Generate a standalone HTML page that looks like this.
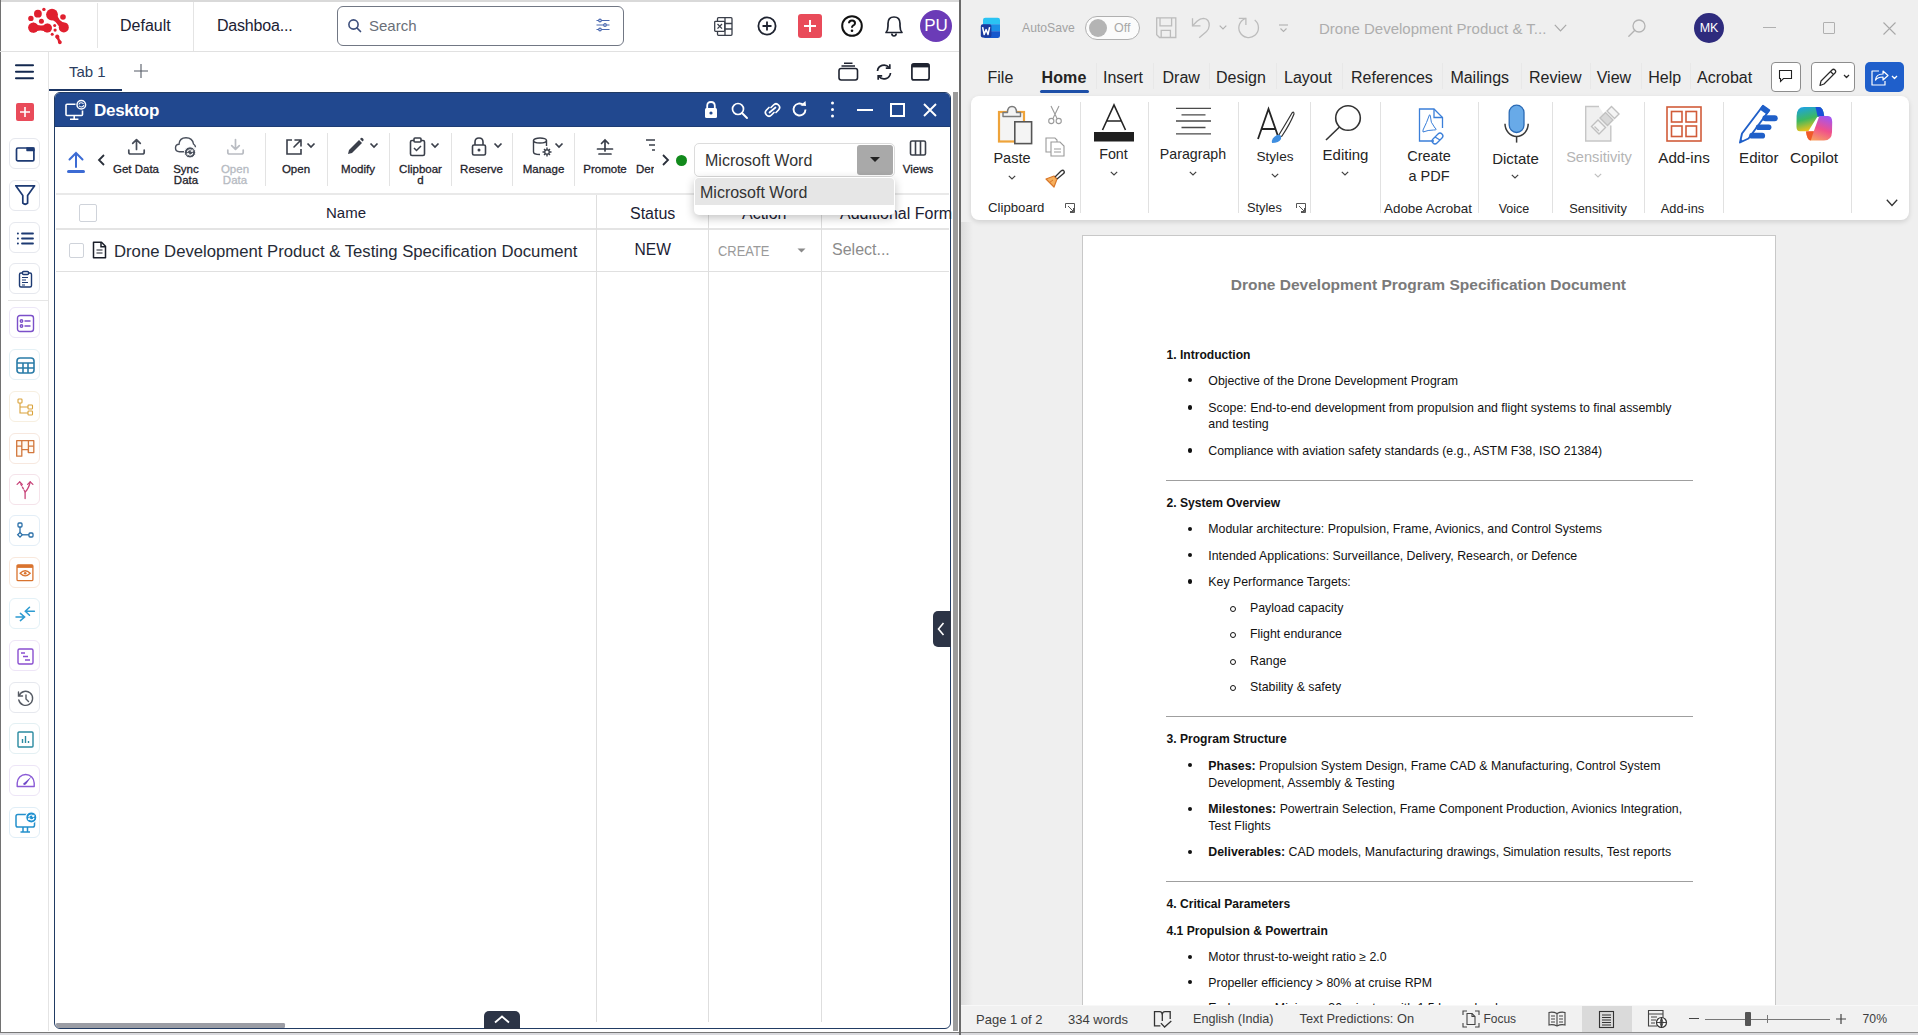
<!DOCTYPE html>
<html><head><meta charset="utf-8">
<style>
*{box-sizing:border-box;margin:0;padding:0}
html,body{width:1918px;height:1035px;overflow:hidden;background:#fff;font-family:"Liberation Sans",sans-serif;position:relative}
.a{position:absolute}
.t{position:absolute;white-space:nowrap;line-height:1}
svg{display:block;position:absolute;overflow:visible}
#left{left:0;top:0;width:961px;height:1035px;background:#fff;overflow:hidden}
#word{left:961px;top:0;width:957px;height:1035px;background:#efefef;overflow:hidden}
.sb{position:absolute;left:9px;width:31px;height:31px;border:1px solid #e6e8ee;border-radius:6px;background:#fff}
.sb svg{left:6px;top:6px}
.tb{position:absolute;font-size:11.5px;font-weight:400;color:#1f232b;text-align:center;line-height:11px;letter-spacing:0;-webkit-text-stroke:0.3px currentColor}
.vs{position:absolute;width:1px;background:#e3e3e3}
</style></head><body>
<div id="left" class="a">
  <!-- top strip / borders -->
  <div class="a" style="left:0;top:0;width:961px;height:2px;background:#d9d9d9"></div>
  <div class="a" style="left:0;top:0;width:1px;height:1035px;background:#727272"></div>
  <div class="a" style="left:0;top:1032px;width:961px;height:3px;background:#dadade;border-top:1px solid #777"></div>
  <!-- header -->
  <svg style="left:0;top:0" width="100" height="51" viewBox="0 0 100 51">
    <g fill="#e0202f">
      <circle cx="43.9" cy="9.4" r="1.7"/>
      <circle cx="37.9" cy="13.7" r="3.9"/>
      <circle cx="30.9" cy="18.4" r="2.7"/>
      <circle cx="41.4" cy="21.2" r="2.5"/>
      <circle cx="63" cy="17" r="2.8"/>
      <circle cx="52" cy="14.6" r="5.9"/>
      <circle cx="63.8" cy="27.4" r="5"/>
      <path d="M47.73,18.53 Q58.63,20.32 60.12,30.79 L67.48,24.01 Q57.165,21.68 56.27,10.67 Z"/>
      <circle cx="33.3" cy="27.6" r="5.2"/>
      <circle cx="47.4" cy="28" r="4.6"/>
      <path d="M33.15,32.8 Q40.49,28.5 47.27,32.6 L47.53,23.4 Q40.21,28.3 33.45,22.4 Z"/>
      <circle cx="54.7" cy="25.4" r="1.5"/>
      <circle cx="55.1" cy="30.1" r="1.6"/>
      <circle cx="52.2" cy="34.3" r="1.5"/>
      <circle cx="57.2" cy="36.6" r="2"/>
      <circle cx="59.9" cy="42.4" r="1.8"/>
      <path d="M55.39,37.44 Q58.27,39.62 58.27,43.16 L61.53,41.64 Q58.83,39.38 59.01,35.76 Z"/>
    </g>
  </svg>
  <div class="a" style="left:97px;top:3px;width:1px;height:45px;background:#e4e4e4"></div>
  <div class="a" style="left:193px;top:2px;width:1px;height:49px;background:#e4e4e4"></div>
  <div class="t" style="left:120px;top:18px;font-size:16px;color:#1b2133">Default</div>
  <div class="t" style="left:217px;top:18px;font-size:16px;color:#1b2133;letter-spacing:-0.2px">Dashboa...</div>
  <div class="a" style="left:0;top:51px;width:961px;height:1px;background:#e1e1e1"></div>
  <!-- search -->
  <div class="a" style="left:337px;top:6px;width:287px;height:40px;border:1px solid #717784;border-radius:6px"></div>
  <svg style="left:347px;top:18px" width="16" height="16" viewBox="0 0 16 16"><circle cx="6.5" cy="6.5" r="4.6" fill="none" stroke="#3d4f7c" stroke-width="1.6"/><path d="M10 10 L13.5 13.5" stroke="#3d4f7c" stroke-width="1.7" stroke-linecap="round"/></svg>
  <div class="t" style="left:369px;top:18px;font-size:15px;color:#6a6f78">Search</div>
  <svg style="left:595px;top:17px" width="16" height="16" viewBox="0 0 16 16"><g stroke="#4a68b0" stroke-width="1.2" fill="#fff"><path d="M1.5 3.5H14.5M1.5 8H14.5M1.5 12.5H14.5"/><circle cx="5" cy="3.5" r="1.3"/><circle cx="10" cy="8" r="1.3"/><circle cx="5" cy="12.5" r="1.3"/></g></svg>
  <!-- header icons -->
  <svg style="left:714px;top:17px" width="19" height="19" viewBox="0 0 19 19"><g fill="none" stroke="#3a3f4a" stroke-width="1.3"><rect x="3.5" y="0.7" width="14.5" height="17.6" rx="1"/><path d="M11 0.7V18.3M11 6.5H18M11 12H18"/><rect x="0.7" y="4.3" width="10" height="10" rx="0.8" fill="#fff"/><path d="M3.5 7 L8 11.6 M8 7 L3.5 11.6"/></g></svg>
  <svg style="left:757px;top:16px" width="20" height="20" viewBox="0 0 20 20"><g fill="none" stroke="#1e2330" stroke-width="1.8"><circle cx="10" cy="10" r="8.6"/><path d="M10 5.5V14.5M5.5 10H14.5"/></g></svg>
  <div class="a" style="left:798px;top:14px;width:24px;height:24px;background:#e94b5a;border-radius:3px"></div>
  <svg style="left:798px;top:14px" width="24" height="24" viewBox="0 0 24 24"><path d="M12 6V18M6 12H18" stroke="#fff" stroke-width="2"/></svg>
  <svg style="left:841px;top:15px" width="22" height="22" viewBox="0 0 22 22"><g fill="none" stroke="#111" stroke-width="2"><circle cx="11" cy="11" r="9.8"/><path d="M8 8.3 Q8 5.5 11 5.5 Q14 5.5 14 8.2 Q14 10 11.8 10.8 Q11 11.2 11 12.8"/></g><circle cx="11" cy="15.8" r="1.3" fill="#111"/></svg>
  <svg style="left:883px;top:14px" width="22" height="24" viewBox="0 0 22 24"><g fill="none" stroke="#1e2330" stroke-width="1.7"><path d="M3 18.5 Q5 16.5 5 12 V9.5 Q5 3 11 3 Q17 3 17 9.5 V12 Q17 16.5 19 18.5 Z" stroke-linejoin="round"/><path d="M8.8 19.5 Q9 22 11 22 Q13 22 13.2 19.5"/></g></svg>
  <div class="a" style="left:920px;top:10px;width:32px;height:32px;border-radius:50%;background:#6b3bb7"></div>
  <div class="t" style="left:920px;top:17px;width:32px;text-align:center;font-size:17px;color:#fff">PU</div>
  <!-- sidebar -->
  <div class="a" style="left:48px;top:52px;width:1px;height:979px;background:#e4e4e4"></div>
  <svg style="left:15px;top:64px" width="19" height="16" viewBox="0 0 19 16"><path d="M1 1.3H18M1 7.8H18M1 14.3H18" stroke="#13284f" stroke-width="2.1" stroke-linecap="round"/></svg>
  <div class="a" style="left:16px;top:103px;width:18px;height:18px;background:#e94b5a;border-radius:2px"></div>
  <svg style="left:16px;top:103px" width="18" height="18" viewBox="0 0 18 18"><path d="M9 4V14M4 9H14" stroke="#fff" stroke-width="1.6"/></svg>
  <div class="a" style="left:8px;top:300px;width:40px;height:1px;background:#e6e6e6"></div>
  <div class="sb" style="top:138px"><svg width="19" height="19" viewBox="0 0 19 19"><rect x="0.5" y="3" width="17.4" height="12.8" rx="1.4" fill="none" stroke="#1d3a73" stroke-width="1.7"/><rect x="10.3" y="2.2" width="8.3" height="4" rx="0.6" fill="#1d3a73"/></svg></div>
  <div class="sb" style="top:180px"><svg width="19" height="19" viewBox="0 0 19 19"><path d="M-0.2 -1.2 H18.6 L11.6 8.4 V16.2 Q9.2 18.3 6.8 16.2 V8.4 Z" fill="none" stroke="#1d3a73" stroke-width="1.7" stroke-linejoin="round"/></svg></div>
  <div class="sb" style="top:222px"><svg width="19" height="19" viewBox="0 0 19 19"><g stroke="#1d3a73" stroke-width="1.8" stroke-linecap="round"><path d="M6 4.5H17M6 9.5H17M6 14.5H17"/><path d="M1.8 4.5H2M1.8 9.5H2M1.8 14.5H2"/></g></svg></div>
  <div class="sb" style="top:263px"><svg width="19" height="19" viewBox="0 0 19 19"><g fill="none" stroke="#1d3a73" stroke-width="1.4"><rect x="3.5" y="3" width="12" height="14" rx="1.5"/><rect x="6.5" y="1.5" width="6" height="3" rx="1" fill="#fff"/><path d="M6 7.5H12M6 10H10M6 12.5H12M6 15H9" stroke-width="1"/></g></svg></div>
  <div class="sb" style="top:307px;border-color:#ece6f7"><svg width="19" height="19" viewBox="0 0 19 19"><g fill="none" stroke="#7b4fc9" stroke-width="1.4"><rect x="1.5" y="1.5" width="16" height="16" rx="2.5"/><circle cx="5.5" cy="7" r="1.2"/><circle cx="5.5" cy="12" r="1.2"/><path d="M8.5 7H14.5M8.5 12H14.5"/></g></svg></div>
  <div class="sb" style="top:349px;border-color:#e3f0f5"><svg width="19" height="19" viewBox="0 0 19 19"><g fill="none" stroke="#2a7ca8" stroke-width="1.6"><rect x="1" y="2" width="17" height="15" rx="3"/><path d="M1 7H18M1 12H18M7 7V17M12 7V17"/></g></svg></div>
  <div class="sb" style="top:391px;border-color:#f7efe0"><svg width="19" height="19" viewBox="0 0 19 19"><g fill="none" stroke="#d9a23a" stroke-width="1.1"><rect x="2" y="1" width="4" height="4" rx="0.8"/><rect x="12" y="7" width="4.5" height="4" rx="0.8"/><rect x="12" y="13" width="4.5" height="4" rx="0.8"/><path d="M4 5V15H12M4 9H12"/></g></svg></div>
  <div class="sb" style="top:433px;border-color:#f7e8df"><svg width="19" height="17" viewBox="0 0 19 17"><g fill="#fffaf3" stroke="#d2773c" stroke-width="1.3" stroke-linejoin="round"><path d="M0.7 0.7 H17.8 V12.6 H12.4 V9.6 H5.8 V16.2 H0.7 Z"/><path d="M5.8 0.7 V9.6 M12.4 0.7 V12.6 M0.7 6.2 H5.8 M12.4 6.2 H17.8" fill="none"/></g></svg></div>
  <div class="sb" style="top:474px;border-color:#f5e3ea"><svg width="19" height="19" viewBox="0 0 19 19"><g fill="none" stroke="#c8457a" stroke-width="1.3" stroke-linecap="round"><path d="M9.1 17.6 V11 Q12.5 8 14.2 1"/><path d="M9.1 11 L3.7 1" stroke-dasharray="2 1.6"/><path d="M11.6 3.4 L14.2 0.8 L16.9 3.4M1.1 3.4 L3.7 0.8 L6.3 3.4"/></g></svg></div>
  <div class="sb" style="top:515px;border-color:#e3eef7"><svg width="19" height="19" viewBox="0 0 19 19"><g fill="none" stroke="#2a6fa8" stroke-width="1.3"><rect x="2" y="1" width="4" height="4" rx="1"/><path d="M4 5V10.5"/><path d="M4 10.5 L6.3 12.8 L4 15.1 L1.7 12.8Z"/><rect x="13" y="11" width="4" height="4" rx="1"/><path d="M6.3 12.8H13"/></g></svg></div>
  <div class="sb" style="top:557px;border-color:#f9e8dc"><svg width="19" height="18" viewBox="0 0 19 18"><g fill="none" stroke="#d9732e" stroke-width="1.3"><rect x="1" y="0.8" width="15.9" height="15.8" rx="1.2"/><path d="M1 2.4H16.9" stroke-width="3"/><path d="M4.1 9.3 Q9.2 4.2 14.2 9.3 Q9.2 14.4 4.1 9.3Z"/></g><circle cx="9.2" cy="9.3" r="1.3" fill="#d9732e"/></svg></div>
  <div class="sb" style="top:598px;border-color:#e3f1f7"><svg width="19" height="18" viewBox="0 0 19 18"><g fill="none" stroke="#2d9bd1" stroke-width="1.5" stroke-linecap="round"><path d="M0 12H8.6M4.4 8.4L8.6 12L4.4 15.6"/><path d="M18.4 6.2H9.5M13.5 2.2L9.3 6.2L13.5 10.2"/></g></svg></div>
  <div class="sb" style="top:640px;border-color:#eee5f7"><svg width="19" height="19" viewBox="0 0 19 19"><g fill="none" stroke="#8a4fd0" stroke-width="1.4"><rect x="2" y="2" width="15" height="15" rx="1.5"/><path d="M5 6H9M7 9.5H12M9 13H14"/></g></svg></div>
  <div class="sb" style="top:682px"><svg width="19" height="19" viewBox="0 0 19 19"><g fill="none" stroke="#555a63" stroke-width="1.4" stroke-linecap="round"><path d="M3.2 6.5 A7 7 0 1 1 2.8 11"/><path d="M2.5 3V7H6.5"/><path d="M10 6V10L12.5 12.5"/></g></svg></div>
  <div class="sb" style="top:723px;border-color:#e3f0f3"><svg width="19" height="19" viewBox="0 0 19 19"><g fill="none" stroke="#2a8aa0" stroke-width="1.4"><rect x="2" y="2" width="15" height="15" rx="1"/><path d="M6.5 13V9M9.5 13V6M12.5 13V11"/></g></svg></div>
  <div class="sb" style="top:765px;border-color:#ede5f7"><svg width="20" height="19" viewBox="0 0 20 19"><g fill="none" stroke="#8a5ad6" stroke-width="1.4" stroke-linejoin="round"><path d="M1.2 14.5 V11 A8.5 8.5 0 0 1 18.2 11 V14.5 Z"/></g><path d="M7.3 12.6 Q6.8 10.8 8.6 10.4 L15.5 4.5 L10.4 11.8 Q9.2 13.5 7.3 12.6Z" fill="#7048c8"/></svg></div>
  <div class="sb" style="top:807px;border-color:#e0eef7"><svg width="22" height="21" viewBox="0 0 22 21" style="left:5px;top:5px"><g fill="none" stroke="#2390cc" stroke-width="1.5"><rect x="1" y="1.5" width="18.5" height="12.5" rx="1.8"/><path d="M8 14V18.3M12.5 14V18.3M5.5 19H15"/></g><circle cx="16.3" cy="4.4" r="5.6" fill="#1e90d0" stroke="#fff" stroke-width="1.2"/><path d="M13.7 4.1 Q14.1 1.9 16.3 2 Q18 2.1 18.8 3.4M19 4.8 Q18.6 7 16.3 6.9 Q14.6 6.8 13.8 5.5" stroke="#fff" stroke-width="1.2" fill="none"/><path d="M18.9 1.8V3.6H17.2M13.6 7V5.2H15.3" stroke="#fff" stroke-width="1" fill="none"/></svg></div>
  <!-- tab bar -->
  <div class="t" style="left:69px;top:64px;font-size:15px;color:#2b3d60">Tab 1</div>
  <svg style="left:133px;top:63px" width="16" height="16" viewBox="0 0 16 16"><path d="M8 1V15M1 8H15" stroke="#555b66" stroke-width="1.1"/></svg>
  <div class="a" style="left:49px;top:89px;width:73px;height:2px;background:#1b3563"></div>
  <svg style="left:838px;top:62px" width="21" height="19" viewBox="0 0 21 19"><g fill="none" stroke="#1e2330" stroke-width="1.6"><rect x="1" y="6.5" width="18.5" height="11.5" rx="2.2"/><path d="M3.5 4H17M6 1.2H14.5"/></g></svg>
  <svg style="left:875px;top:63px" width="18" height="18" viewBox="0 0 18 18"><g fill="none" stroke="#1e2330" stroke-width="1.7"><path d="M2.5 8 A6.5 6.5 0 0 1 14 4.5"/><path d="M15.5 10 A6.5 6.5 0 0 1 4 13.5"/><path d="M14.8 1.2V5.2H10.8M3.2 16.8V12.8H7.2"/></g></svg>
  <svg style="left:911px;top:63px" width="19" height="18" viewBox="0 0 19 18"><rect x="0.9" y="0.9" width="17.2" height="16" rx="2" fill="none" stroke="#1e2330" stroke-width="1.7"/><rect x="0.9" y="0.9" width="17.2" height="3.5" fill="#1e2330"/></svg>
  <!-- WINDOW -->
  <div class="a" style="left:54px;top:92px;width:897px;height:937px;border:1.2px solid #213b63;border-radius:6px;background:#fff;overflow:hidden">
    <div class="a" style="left:-1px;top:-1px;width:899px;height:35px;background:#21488f;border-bottom:1px solid #1d3c74"></div>
  </div>
  <!-- title bar content -->
  <svg style="left:65px;top:100px" width="22" height="21" viewBox="0 0 22 21"><g fill="none" stroke="#fff" stroke-width="1.6"><path d="M10.5 4.2H2Q1 4.2 1 5.2V14.5Q1 15.5 2 15.5H16.5Q17.5 15.5 17.5 14.5V10.5"/><path d="M9.2 15.5V19.2M5 19.3H13.4"/></g><circle cx="16.3" cy="4.8" r="4.3" fill="none" stroke="#fff" stroke-width="1.5"/><path d="M13.9 4.5 Q14.2 2.6 16.3 2.7 Q17.8 2.8 18.5 4M18.7 5.2 Q18.4 7.1 16.3 7 Q14.8 6.9 14.1 5.7" stroke="#fff" stroke-width="1.1" fill="none"/></svg>
  <div class="t" style="left:94px;top:102px;font-size:17px;font-weight:700;color:#fff;letter-spacing:-0.3px">Desktop</div>
  <svg style="left:704px;top:101px" width="14" height="17" viewBox="0 0 14 17"><path d="M3.2 8V4.8Q3.2 1 7 1Q10.8 1 10.8 4.8V8" fill="none" stroke="#fff" stroke-width="1.8"/><rect x="1" y="7" width="12" height="10" rx="1.5" fill="#fff"/><circle cx="7" cy="12" r="1.6" fill="#21488f"/></svg>
  <svg style="left:731px;top:102px" width="17" height="17" viewBox="0 0 17 17"><circle cx="7" cy="7" r="5.5" fill="none" stroke="#fff" stroke-width="1.7"/><path d="M11 11L16 16" stroke="#fff" stroke-width="1.9" stroke-linecap="round"/></svg>
  <svg style="left:763px;top:101px" width="19" height="18" viewBox="0 0 19 18"><g fill="none" stroke="#fff" stroke-width="1.7" stroke-linecap="round"><path d="M8 6.5 L10.5 4 Q13 1.5 15.5 4 Q18 6.5 15.5 9 L13 11.5"/><path d="M11 11.5 L8.5 14 Q6 16.5 3.5 14 Q1 11.5 3.5 9 L6 6.5"/><path d="M6.5 11.5 L12.5 6.5"/></g></svg>
  <svg style="left:791px;top:101px" width="17" height="17" viewBox="0 0 17 17"><path d="M14.5 8.5 A6 6 0 1 1 12.5 4" fill="none" stroke="#fff" stroke-width="1.9"/><path d="M9.5 4.5 L15 5 L14.5 0" fill="#fff"/></svg>
  <svg style="left:830px;top:101px" width="5" height="17" viewBox="0 0 5 17"><circle cx="2.5" cy="2" r="1.5" fill="#fff"/><circle cx="2.5" cy="8.5" r="1.5" fill="#fff"/><circle cx="2.5" cy="15" r="1.5" fill="#fff"/></svg>
  <div class="a" style="left:857px;top:109px;width:16px;height:2px;background:#fff"></div>
  <div class="a" style="left:890px;top:103px;width:15px;height:14px;border:2px solid #fff"></div>
  <svg style="left:923px;top:103px" width="14" height="14" viewBox="0 0 14 14"><path d="M1 1L13 13M13 1L1 13" stroke="#fff" stroke-width="1.9"/></svg>
  <!-- toolbar -->
  <svg style="left:66px;top:150px" width="20" height="24" viewBox="0 0 20 24"><g stroke="#3c6bd4" stroke-width="2" fill="none" stroke-linecap="round"><path d="M10 3V17M3.5 9.5L10 3L16.5 9.5"/></g><rect x="1" y="20" width="18" height="3" rx="1.5" fill="#3c6bd4"/></svg>
  <svg style="left:97px;top:154px" width="9" height="12" viewBox="0 0 9 12"><path d="M7 1L2 6L7 11" fill="none" stroke="#2a2f3a" stroke-width="1.8"/></svg>
  <svg style="left:127px;top:138px" width="19" height="17" viewBox="0 0 19 17"><g fill="none" stroke="#464c58" stroke-width="1.7" stroke-linecap="round" stroke-linejoin="round"><path d="M9.5 11.5V1.8M5.7 5.4L9.5 1.6L13.3 5.4"/><path d="M1.8 12V14.2Q1.8 16 3.6 16H15.4Q17.2 16 17.2 14.2V12"/></g></svg>
  <div class="tb" style="left:110px;top:164px;width:52px">Get Data</div>
  <svg style="left:174px;top:137px" width="24" height="22" viewBox="0 0 24 22"><path d="M11 14.7 H5.5 Q1.5 14.7 1.5 11 Q1.5 7.5 5 7.3 Q5.5 0.8 12 0.8 Q18.5 0.8 19.5 7 Q21.5 8.5 21.5 10.3" fill="none" stroke="#4a505c" stroke-width="1.4"/><circle cx="16" cy="15.4" r="5.6" fill="#4a505c" stroke="#fff" stroke-width="1"/><path d="M13.3 14.9 Q13.7 12.6 16 12.7 Q17.8 12.8 18.5 14.2M18.7 15.9 Q18.3 18.2 16 18.1 Q14.2 18 13.5 16.6" stroke="#fff" stroke-width="1.1" fill="none"/><path d="M18.8 12.3V14.4H16.8M13.2 18.5V16.4H15.2" stroke="#fff" stroke-width="0.9" fill="none"/></svg>
  <div class="tb" style="left:165px;top:164px;width:42px">Sync<br>Data</div>
  <svg style="left:226px;top:138px" width="19" height="17" viewBox="0 0 19 17"><g fill="none" stroke="#b9bcc2" stroke-width="1.7" stroke-linecap="round" stroke-linejoin="round"><path d="M9.5 1.5V11.2M5.7 7.6L9.5 11.4L13.3 7.6"/><path d="M1.8 12V14.2Q1.8 16 3.6 16H15.4Q17.2 16 17.2 14.2V12"/></g></svg>
  <div class="tb" style="left:214px;top:164px;width:42px;color:#b6bac2">Open<br>Data</div>
  <div class="vs" style="left:265px;top:133px;height:53px"></div>
  <svg style="left:285px;top:138px" width="32" height="18" viewBox="0 0 32 18"><g fill="none" stroke="#3a3f4a" stroke-width="1.6"><path d="M7 2H2V16H16V11"/><path d="M10 2H16V8M16 2L9 9" stroke-linecap="round"/><path d="M22.5 5.5L26 9L29.5 5.5" stroke-width="1.7"/></g></svg>
  <div class="tb" style="left:276px;top:164px;width:40px">Open</div>
  <div class="vs" style="left:327px;top:133px;height:53px"></div>
  <svg style="left:346px;top:137px" width="34" height="19" viewBox="0 0 34 19"><path d="M2 17L3 13L13 3L16 6L6 16Z" fill="#3a3f4a"/><path d="M14 2L15 1Q16 0.5 17 1.5Q18 2.5 17.5 3.5L16.5 4.5Z" fill="#3a3f4a"/><path d="M24.5 6.5L28 10L31.5 6.5" fill="none" stroke="#3a3f4a" stroke-width="1.7"/></svg>
  <div class="tb" style="left:336px;top:164px;width:44px">Modify</div>
  <div class="vs" style="left:389px;top:133px;height:53px"></div>
  <svg style="left:409px;top:137px" width="32" height="19" viewBox="0 0 32 19"><g fill="none" stroke="#3a3f4a" stroke-width="1.6"><rect x="1.5" y="3.5" width="14" height="15" rx="1.5"/><rect x="5" y="1" width="7" height="4" rx="1" fill="#fff"/><path d="M5 11L7.5 13.5L12 9" stroke-width="1.5"/><path d="M22.5 6.5L26 10L29.5 6.5" stroke-width="1.7"/></g></svg>
  <div class="tb" style="left:398px;top:164px;width:45px">Clipboar<br>d</div>
  <div class="vs" style="left:451px;top:133px;height:53px"></div>
  <svg style="left:471px;top:137px" width="32" height="19" viewBox="0 0 32 19"><g fill="none" stroke="#3a3f4a" stroke-width="1.6"><path d="M4 8V5Q4 1 8 1Q12 1 12 5V8"/><rect x="1.5" y="8" width="13" height="10" rx="1.5"/><path d="M23.5 6.5L27 10L30.5 6.5" stroke-width="1.7"/></g><circle cx="8" cy="13" r="1.5" fill="#3a3f4a"/></svg>
  <div class="tb" style="left:459px;top:164px;width:45px">Reserve</div>
  <div class="vs" style="left:512px;top:133px;height:53px"></div>
  <svg style="left:532px;top:137px" width="32" height="20" viewBox="0 0 32 20"><g fill="none" stroke="#3a3f4a" stroke-width="1.4"><ellipse cx="8" cy="3.5" rx="6.5" ry="2.5"/><path d="M1.5 3.5V15Q1.5 17.5 8 17.5M14.5 3.5V9"/><circle cx="15" cy="15" r="2.3"/><path d="M15 10.5V12M15 18V19.5M10.5 15H12M18 15H19.5M12 12L13 13M17 17L18 18M18 12L17 13M12 18L13 17"/><path d="M23.5 6.5L27 10L30.5 6.5" stroke-width="1.7"/></g></svg>
  <div class="tb" style="left:521px;top:164px;width:45px">Manage</div>
  <div class="vs" style="left:574px;top:133px;height:53px"></div>
  <svg style="left:596px;top:138px" width="18" height="18" viewBox="0 0 18 18"><g fill="none" stroke="#3a3f4a" stroke-width="1.7" stroke-linecap="round"><path d="M9 13V2M5.5 5.5L9 2L12.5 5.5M1.5 11H16.5M3 16H15"/></g></svg>
  <div class="tb" style="left:580px;top:164px;width:50px">Promote</div>
  <svg style="left:645px;top:138px" width="10" height="16" viewBox="0 0 10 16"><path d="M1 2H10M4 7H10M7 12H10" stroke="#3a3f4a" stroke-width="1.6"/></svg>
  <div class="tb" style="left:636px;top:164px;width:30px;text-align:left;overflow:hidden;height:12px"><span style="display:inline-block;width:18px;overflow:hidden">Dem</span></div>
  <svg style="left:661px;top:154px" width="9" height="12" viewBox="0 0 9 12"><path d="M2 1L7 6L2 11" fill="none" stroke="#2a2f3a" stroke-width="1.8"/></svg>
  <div class="a" style="left:676px;top:155px;width:11px;height:11px;border-radius:50%;background:#128a1c"></div>
  <div class="a" style="left:694px;top:143px;width:201px;height:34px;border:1px solid #dcdcdc;border-radius:5px;background:#fff"></div>
  <div class="t" style="left:705px;top:153px;font-size:16px;color:#333">Microsoft Word</div>
  <div class="a" style="left:857px;top:145px;width:36px;height:30px;background:#a9a9a9;border-radius:3px"></div>
  <svg style="left:869px;top:156px" width="12" height="7" viewBox="0 0 12 7"><path d="M1 1H11L6 6Z" fill="#222"/></svg>
  <svg style="left:909px;top:140px" width="18" height="16" viewBox="0 0 18 16"><g fill="none" stroke="#3a3f4a" stroke-width="1.6"><rect x="1.5" y="1" width="15" height="14" rx="1.5"/><path d="M6.5 1V15M11.5 1V15"/></g></svg>
  <div class="tb" style="left:900px;top:164px;width:36px">Views</div>
  <div class="a" style="left:56px;top:193px;width:893px;height:2px;background:#e9e9e9"></div>
  <!-- table -->
  <div class="a" style="left:79px;top:204px;width:18px;height:18px;border:1px solid #cfd3da;border-radius:2px"></div>
  <div class="t" style="left:326px;top:205px;font-size:15px;color:#1b2133">Name</div>
  <div class="t" style="left:630px;top:206px;font-size:16px;color:#1b2133">Status</div>
  <div class="t" style="left:742px;top:206px;font-size:16px;color:#1b2133">Action</div>
  <div class="t" style="left:840px;top:206px;font-size:16px;color:#1b2133">Additional Form</div>
  <div class="a" style="left:56px;top:228px;width:893px;height:2px;background:#e4e4e4"></div>
  <div class="a" style="left:56px;top:271px;width:893px;height:1px;background:#e0e0e0"></div>
  <div class="a" style="left:596px;top:195px;width:1px;height:827px;background:#dedede"></div>
  <div class="a" style="left:708px;top:195px;width:1px;height:827px;background:#dedede"></div>
  <div class="a" style="left:821px;top:195px;width:1px;height:827px;background:#dedede"></div>
  <div class="a" style="left:69px;top:243px;width:15px;height:15px;border:1px solid #cfd3da;border-radius:2px"></div>
  <svg style="left:92px;top:241px" width="15" height="18" viewBox="0 0 15 18"><g fill="none" stroke="#1b1f2a" stroke-width="1.5"><path d="M1.5 1.2H9.5L13.5 5.2V16.8H1.5Z" stroke-linejoin="round"/><path d="M9 1.2V5.7H13.5"/><path d="M4.5 9H10.5M4.5 12H10.5" stroke-width="1.2"/></g></svg>
  <div class="t" style="left:114px;top:243.5px;font-size:16.7px;color:#262b36">Drone Development Product &amp; Testing Specification Document</div>
  <div class="t" style="left:634.5px;top:242.3px;font-size:15.6px;color:#1b2133">NEW</div>
  <div class="t" style="left:717.5px;top:244.2px;font-size:14.8px;color:#9a9a9a;transform:scaleX(0.873);transform-origin:0 0">CREATE</div>
  <svg style="left:797px;top:248px" width="10" height="6" viewBox="0 0 10 6"><path d="M0.5 0.5H8.5L4.5 4.5Z" fill="#8a8a8a"/></svg>
  <div class="t" style="left:832px;top:242px;font-size:16px;color:#8c8c8c">Select...</div>
  <!-- dropdown popup -->
  <div class="a" style="left:694px;top:177px;width:201px;height:38px;background:#fff;border-radius:5px;box-shadow:0 3px 10px rgba(0,0,0,0.24)"></div>
  <div class="a" style="left:695px;top:177.5px;width:199px;height:27.5px;background:#e6e6e6;border-radius:4px 4px 0 0"></div>
  <div class="t" style="left:700px;top:185px;font-size:16px;color:#333">Microsoft Word</div>
  <!-- collapse buttons -->
  <div class="a" style="left:933px;top:611px;width:18px;height:36px;background:#2c3446;border-radius:5px 0 0 5px"></div>
  <svg style="left:936px;top:621px" width="10" height="16" viewBox="0 0 10 16"><path d="M7.5 2L2.5 8L7.5 14" fill="none" stroke="#fff" stroke-width="1.6"/></svg>
  <div class="a" style="left:484px;top:1011px;width:36px;height:18px;background:#2c3446;border-radius:5px 5px 0 0"></div>
  <svg style="left:492px;top:1014px" width="20" height="10" viewBox="0 0 20 10"><path d="M3 8.5L10 2.5L17 8.5" fill="none" stroke="#fff" stroke-width="1.8"/></svg>
  <!-- h-scroll -->
  <div class="a" style="left:56px;top:1023px;width:229px;height:5px;background:#9b9da5;border-radius:3px 3px 3px 8px"></div>
  <!-- v-scroll -->
  <div class="a" style="left:953px;top:92px;width:5px;height:939px;background:#9c9c9c"></div>
  <div class="a" style="left:959px;top:0;width:2px;height:1035px;background:#6a6a6a"></div>
</div>
<div id="word" class="a">
<div class="a" style="left:0;top:0;width:957px;height:1035px;background:#efefef"></div>
<div class="a" style="left:0;top:222px;width:12px;height:783px;background:linear-gradient(90deg,#dcdcdc,#efefef)"></div>
<svg style="left:19px;top:17px" width="21" height="22" viewBox="0 0 21 22">
<defs><clipPath id="wclip"><rect x="3" y="0.8" width="17" height="20.2" rx="2.3"/></clipPath></defs>
<g clip-path="url(#wclip)"><rect x="0" y="0" width="21" height="7.2" fill="#2ac3f3"/><rect x="0" y="7.2" width="21" height="7" fill="#1a8fe6"/><rect x="0" y="14.2" width="21" height="8" fill="#1557cc"/></g>
<rect x="0.8" y="7.2" width="10.6" height="13.3" rx="1.8" fill="#1a3a9e"/>
<path d="M2.6 10.2 L4.2 17.5 L6.1 12.6 L8 17.5 L9.6 10.2" fill="none" stroke="#fff" stroke-width="1.5" stroke-linejoin="round"/>
</svg>
<div class="t" style="left:61px;top:22px;font-size:12.2px;color:#a3a3a3">AutoSave</div>
<div class="a" style="left:124px;top:15.5px;width:55px;height:24px;border:1px solid #b0b0b0;border-radius:12px;background:#fbfbfb"></div>
<div class="a" style="left:128px;top:19px;width:18px;height:18px;border-radius:50%;background:#b4b4b4"></div>
<div class="t" style="left:153px;top:22px;font-size:12.5px;color:#a8a8a8">Off</div>
<svg style="left:195px;top:17px" width="21" height="22" viewBox="0 0 21 22"><g fill="none" stroke="#bcbcbc" stroke-width="1.3"><path d="M0.7 0.9 H19.8 V20.5 H3.5 L0.7 17.8 Z"/><path d="M4 0.9 V8.8 H15.6 V0.9 M5.2 20.5 V13.4 H14.4 V20.5"/></g></svg>
<svg style="left:230px;top:17px" width="20" height="22" viewBox="0 0 20 22"><g fill="none" stroke="#bcbcbc" stroke-width="1.3"><path d="M1.5 1.3 V8.8 H9.5"/><path d="M1.5 8.8 L6 4.3 Q9 1.3 12.5 1.3 Q18.5 1.8 18.2 8.8 Q18 12 15.5 14.5 L8.2 20.7"/></g></svg>
<svg style="left:258px;top:25px" width="8" height="5" viewBox="0 0 8 5"><path d="M0.7 0.7L4 4L7.3 0.7" fill="none" stroke="#b0b0b0" stroke-width="1.1"/></svg>
<svg style="left:276px;top:16px" width="24" height="24" viewBox="0 0 24 24"><g fill="none" stroke="#bcbcbc" stroke-width="1.3"><path d="M1.8 2.3 H8.9 V9"/><path d="M8.9 2.3 A9.8 9.8 0 1 0 17.7 4"/></g></svg>
<svg style="left:317px;top:24px" width="11" height="10" viewBox="0 0 11 10"><g fill="none" stroke="#b0b0b0" stroke-width="1.1"><path d="M1 1H10"/><path d="M2.5 4.5L5.5 7.5L8.5 4.5"/></g></svg>
<div class="t" style="left:358px;top:21px;font-size:15px;color:#adadad">Drone Development Product &amp; T...</div>
<svg style="left:593px;top:24px" width="13" height="8" viewBox="0 0 13 8"><path d="M0.8 0.8L6.5 6.8L12.2 0.8" fill="none" stroke="#a8a8a8" stroke-width="1.2"/></svg>
<svg style="left:667px;top:19px" width="18" height="18" viewBox="0 0 18 18"><g fill="none" stroke="#b3b3b3" stroke-width="1.3"><circle cx="11" cy="7" r="6"/><path d="M6.8 11.2 L0.8 17.2" stroke-linecap="round"/></g></svg>
<div class="a" style="left:733px;top:13px;width:30px;height:30px;border-radius:50%;background:#2e2b7d"></div>
<div class="t" style="left:733px;top:22px;width:30px;text-align:center;font-size:12.5px;color:#fff">MK</div>
<div class="a" style="left:802px;top:27px;width:13px;height:1px;background:#b0b0b0"></div>
<div class="a" style="left:862px;top:22px;width:12px;height:12px;border:1px solid #b0b0b0;border-radius:1px"></div>
<svg style="left:922px;top:22px" width="13" height="13" viewBox="0 0 13 13"><path d="M0.5 0.5L12.5 12.5M12.5 0.5L0.5 12.5" stroke="#a8a8a8" stroke-width="1.1"/></svg>
<div class="t" style="left:26.5px;top:70px;font-size:16px;color:#242424;">File</div>
<div class="t" style="left:80.6px;top:70px;font-size:16px;color:#242424;font-weight:700;letter-spacing:0.1px;">Home</div>
<div class="t" style="left:142px;top:70px;font-size:16px;color:#242424;">Insert</div>
<div class="t" style="left:201.5px;top:70px;font-size:16px;color:#242424;">Draw</div>
<div class="t" style="left:255px;top:70px;font-size:16px;color:#242424;">Design</div>
<div class="t" style="left:323px;top:70px;font-size:16px;color:#242424;">Layout</div>
<div class="t" style="left:390px;top:70px;font-size:16px;color:#242424;">References</div>
<div class="t" style="left:489.4px;top:70px;font-size:16px;color:#242424;">Mailings</div>
<div class="t" style="left:568px;top:70px;font-size:16px;color:#242424;">Review</div>
<div class="t" style="left:635.7px;top:70px;font-size:16px;color:#242424;">View</div>
<div class="t" style="left:687.3px;top:70px;font-size:16px;color:#242424;">Help</div>
<div class="t" style="left:736px;top:70px;font-size:16px;color:#242424;">Acrobat</div>
<div class="a" style="left:134.6px;top:63px;width:1px;height:26px;background:#e8e8e8"></div>
<div class="a" style="left:192px;top:63px;width:1px;height:26px;background:#e8e8e8"></div>
<div class="a" style="left:248px;top:63px;width:1px;height:26px;background:#e8e8e8"></div>
<div class="a" style="left:314.6px;top:63px;width:1px;height:26px;background:#e8e8e8"></div>
<div class="a" style="left:381px;top:63px;width:1px;height:26px;background:#e8e8e8"></div>
<div class="a" style="left:480.5px;top:63px;width:1px;height:26px;background:#e8e8e8"></div>
<div class="a" style="left:560px;top:63px;width:1px;height:26px;background:#e8e8e8"></div>
<div class="a" style="left:629px;top:63px;width:1px;height:26px;background:#e8e8e8"></div>
<div class="a" style="left:679.7px;top:63px;width:1px;height:26px;background:#e8e8e8"></div>
<div class="a" style="left:729px;top:63px;width:1px;height:26px;background:#e8e8e8"></div>
<div class="a" style="left:79px;top:90px;width:49px;height:3px;border-radius:2px;background:#1d4fa8"></div>
<div class="a" style="left:810px;top:62px;width:30px;height:30px;border:1px solid #8d8d8d;border-radius:4px;background:#fff"></div>
<svg style="left:817px;top:69px" width="16" height="15" viewBox="0 0 16 15"><path d="M1.5 1.5H13.5V9.5H5.5L2.5 12.5V9.5H1.5Z" fill="none" stroke="#222" stroke-width="1.1" stroke-linejoin="miter"/></svg>
<div class="a" style="left:850px;top:62px;width:44px;height:30px;border:1px solid #8d8d8d;border-radius:4px;background:#fff"></div>
<svg style="left:857px;top:67px" width="34" height="20" viewBox="0 0 34 20"><g fill="none" stroke="#2a2a2a" stroke-width="1.2" stroke-linejoin="round"><path d="M2 18.5 L3 14 L14 3 Q15.5 1.5 17 3 Q18.5 4.5 17 6 L6 17 Z"/><path d="M12.5 4.5 L15.5 7.5"/><path d="M26 8 L28.5 10.5 L31 8" stroke-width="1.3"/></g></svg>
<div class="a" style="left:904px;top:62px;width:39px;height:30px;border-radius:5px;background:#1f5fcb"></div>
<svg style="left:909px;top:68px" width="30" height="18" viewBox="0 0 30 18"><g fill="none" stroke="#fff" stroke-width="1.2" stroke-linejoin="round"><path d="M9 3H2V17H15V13"/><path d="M5.5 12 Q6 6 13 6 V3 L18 7.5 L13 12 V9 Q8 9 5.5 12Z"/><path d="M22 8 L24.5 10.5 L27 8" stroke-width="1.3"/></g></svg>
<div class="a" style="left:10px;top:96px;width:938px;height:124px;background:#fff;border-radius:8px;box-shadow:0 2px 5px rgba(0,0,0,0.13)"></div>
<div class="a" style="left:118.6px;top:102px;width:1px;height:111px;background:#e1e1e1"></div>
<div class="a" style="left:187.2px;top:102px;width:1px;height:111px;background:#e1e1e1"></div>
<div class="a" style="left:277.3px;top:102px;width:1px;height:111px;background:#e1e1e1"></div>
<div class="a" style="left:349.3px;top:102px;width:1px;height:111px;background:#e1e1e1"></div>
<div class="a" style="left:419.4px;top:102px;width:1px;height:111px;background:#e1e1e1"></div>
<div class="a" style="left:517px;top:102px;width:1px;height:111px;background:#e1e1e1"></div>
<div class="a" style="left:591px;top:102px;width:1px;height:111px;background:#e1e1e1"></div>
<div class="a" style="left:683px;top:102px;width:1px;height:111px;background:#e1e1e1"></div>
<div class="a" style="left:761.6px;top:102px;width:1px;height:111px;background:#e1e1e1"></div>
<div class="a" style="left:890px;top:102px;width:1px;height:111px;background:#e1e1e1"></div>
<svg style="left:35px;top:104px" width="38" height="42" viewBox="0 0 38 42">
<rect x="3" y="8" width="25" height="29.5" fill="#f4f4f4" stroke="#eea33a" stroke-width="2.2"/>
<path d="M7 12.5 V8.5 H11.5 Q11.5 2.5 16 2.5 Q20.5 2.5 20.5 8.5 H24.5 V12.5 Z" fill="#f4f4f4" stroke="#7a7a7a" stroke-width="1.4" stroke-linejoin="round"/>
<rect x="18.8" y="17.8" width="16.8" height="21.8" fill="#f4f4f4" stroke="#555" stroke-width="1.6"/>
</svg>
<div class="t" style="left:-9.0px;top:151.3px;width:120px;text-align:center;font-size:14.5px;color:#242424">Paste</div>
<svg style="left:47px;top:175.0px" width="8" height="5" viewBox="0 0 8 5"><path d="M0.8 0.8L4 4L7.2 0.8" fill="none" stroke="#424242" stroke-width="1.2"/></svg>
<svg style="left:87px;top:105px" width="14" height="20" viewBox="0 0 14 20"><g fill="none" stroke="#9a9a9a" stroke-width="1.1"><circle cx="3.3" cy="16" r="2.6"/><circle cx="10.7" cy="16" r="2.6"/><path d="M4.8 13.8L11 1M9.2 13.8L3 1"/></g></svg>
<svg style="left:84px;top:137px" width="20" height="20" viewBox="0 0 20 20"><g fill="none" stroke="#9a9a9a" stroke-width="1.1"><path d="M6 15H1V1H10L12 3V5"/><path d="M6 5H15L19 9V19H6Z"/><path d="M9 12H16M9 15H16"/></g></svg>
<svg style="left:84px;top:169px" width="20" height="19" viewBox="0 0 20 19"><g stroke-linejoin="round"><path d="M1 10 L9 18 L12 10 L9 7 Z" fill="#f6b05c" stroke="#d9772a" stroke-width="1.2"/><path d="M10 8 L16 2 Q18 0.5 19 2 Q20 3.5 18 5 L12 10" fill="none" stroke="#333" stroke-width="1.3"/><path d="M4.5 13.5L8 11" stroke="#d9772a" stroke-width="1"/></g></svg>
<div class="t" style="left:27px;top:201.0px;font-size:13.2px;color:#242424;font-weight:400;">Clipboard</div>
<svg style="left:104px;top:203px" width="10" height="10" viewBox="0 0 10 10"><g fill="none" stroke="#555" stroke-width="1"><path d="M0.5 5V0.5H9.5V9.5H5"/><path d="M3 3L8.5 8.5M5 8.5H8.5V5"/></g></svg>
<svg style="left:133px;top:104px" width="40" height="38" viewBox="0 0 40 38"><path d="M8.5 26 L20 1 L31.5 26 M13 17H27" fill="none" stroke="#242424" stroke-width="1.6"/><rect x="0" y="28" width="40" height="9.5" fill="#1f1f1f"/></svg>
<div class="t" style="left:92.5px;top:147.3px;width:120px;text-align:center;font-size:14.3px;color:#242424">Font</div>
<svg style="left:148.5px;top:170.5px" width="8" height="5" viewBox="0 0 8 5"><path d="M0.8 0.8L4 4L7.2 0.8" fill="none" stroke="#424242" stroke-width="1.2"/></svg>
<svg style="left:214.5px;top:107px" width="36" height="28" viewBox="0 0 36 28"><g stroke="#4a4a4a" stroke-width="1.4"><path d="M0 1.4H35M5.5 7.9H29.5M0 14H35M5.5 20.5H29.5M0 26.9H35"/></g></svg>
<div class="t" style="left:172.0px;top:147.3px;width:120px;text-align:center;font-size:14.2px;color:#242424">Paragraph</div>
<svg style="left:228px;top:170.5px" width="8" height="5" viewBox="0 0 8 5"><path d="M0.8 0.8L4 4L7.2 0.8" fill="none" stroke="#424242" stroke-width="1.2"/></svg>
<svg style="left:296px;top:108px" width="38" height="36" viewBox="0 0 38 36"><path d="M1 31 L11.5 1 L22 31 M5 21H18" fill="none" stroke="#242424" stroke-width="1.8"/>
<path d="M20 30 Q25 22 35 5 Q37 3 37 6 Q33 16 25 28 Z" fill="#fff" stroke="#333" stroke-width="1.2"/>
<path d="M15 35 Q14 30 20 27 Q25 26 24 31 Q22 35 15 35Z" fill="#3f8ee0"/></svg>
<div class="t" style="left:254.0px;top:149.7px;width:120px;text-align:center;font-size:13.6px;color:#242424">Styles</div>
<svg style="left:309.5px;top:173.0px" width="8" height="5" viewBox="0 0 8 5"><path d="M0.8 0.8L4 4L7.2 0.8" fill="none" stroke="#424242" stroke-width="1.2"/></svg>
<div class="t" style="left:286px;top:201.5px;font-size:12.8px;color:#242424;font-weight:400;">Styles</div>
<svg style="left:335px;top:203px" width="10" height="10" viewBox="0 0 10 10"><g fill="none" stroke="#555" stroke-width="1"><path d="M0.5 5V0.5H9.5V9.5H5"/><path d="M3 3L8.5 8.5M5 8.5H8.5V5"/></g></svg>
<svg style="left:364px;top:104px" width="38" height="37" viewBox="0 0 38 37"><circle cx="23" cy="14" r="12.3" fill="none" stroke="#333" stroke-width="1.6"/><path d="M14.5 23 L1 36" stroke="#333" stroke-width="1.6"/></svg>
<div class="t" style="left:324.5px;top:147.2px;width:120px;text-align:center;font-size:15px;color:#242424">Editing</div>
<svg style="left:379.5px;top:170.5px" width="8" height="5" viewBox="0 0 8 5"><path d="M0.8 0.8L4 4L7.2 0.8" fill="none" stroke="#424242" stroke-width="1.2"/></svg>
<svg style="left:457px;top:108px" width="26" height="36" viewBox="0 0 26 36"><g fill="none" stroke="#3b7fd9" stroke-width="1.3"><path d="M16 33H1.5V1H16L24.5 9.5V20"/><path d="M16 1V9.5H24.5"/><path d="M5 22 Q9 14 11 8 Q12 5 12.5 9 Q12 14 17 20 Q20 22 15.5 22 Q10 22 5 24Z" stroke-width="1"/><path d="M15 31 L20 26 Q22 24 24 26 Q26 28 24 30 L19 35 Q17 37 15 35 Q13 33 15 31Z"/><path d="M17 29 L22 32"/></g></svg>
<div class="t" style="left:408.0px;top:149.3px;width:120px;text-align:center;font-size:14.5px;color:#242424">Create</div>
<div class="t" style="left:408.0px;top:168.9px;width:120px;text-align:center;font-size:14.5px;color:#242424">a PDF</div>
<div class="t" style="left:423px;top:201.9px;font-size:13.4px;color:#242424;font-weight:400;">Adobe Acrobat</div>
<svg style="left:542.5px;top:104px" width="26" height="40" viewBox="0 0 26 40"><rect x="5.2" y="1.2" width="14.8" height="27.3" rx="7.4" fill="#68aae8" stroke="#2a6ab5" stroke-width="1.3"/><path d="M1 19.8 A11.6 12.6 0 0 0 24.2 19.8" fill="none" stroke="#3a3a3a" stroke-width="1.5"/><path d="M12.6 32.4 V38.6" stroke="#3a3a3a" stroke-width="1.5"/></svg>
<div class="t" style="left:494.5px;top:151.2px;width:120px;text-align:center;font-size:15px;color:#242424">Dictate</div>
<svg style="left:550px;top:174.0px" width="8" height="5" viewBox="0 0 8 5"><path d="M0.8 0.8L4 4L7.2 0.8" fill="none" stroke="#424242" stroke-width="1.2"/></svg>
<div class="t" style="left:493.0px;top:202.5px;width:120px;text-align:center;font-size:12.5px;color:#242424">Voice</div>
<svg style="left:624px;top:104px" width="36" height="40" viewBox="0 0 36 40"><path d="M14 2.5 H0.7 V37 H25.8 V21.5" fill="#f0f0f0" stroke="#c6c6c6" stroke-width="1.4"/><g fill="#f4f4f4" stroke="#c0c0c0" stroke-width="1.4"><path d="M6.5 22.5 L13 16 L20.5 23.5 L14 30 Z"/><path d="M15 14 L20.5 8.5 L28 16 L22.5 21.5 Z" fill="#d8d8d8"/><path d="M22 7 L26.5 2.5 L34 10 L29.5 14.5 Z"/></g><path d="M9.5 22.5 L14 27" stroke="#c0c0c0" stroke-width="1.2"/></svg>
<div class="t" style="left:578.0px;top:149.9px;width:120px;text-align:center;font-size:14.6px;color:#b5b5b5">Sensitivity</div>
<svg style="left:633px;top:173.0px" width="8" height="5" viewBox="0 0 8 5"><path d="M0.8 0.8L4 4L7.2 0.8" fill="none" stroke="#c0c0c0" stroke-width="1.2"/></svg>
<div class="t" style="left:577.0px;top:202.5px;width:120px;text-align:center;font-size:12.8px;color:#242424">Sensitivity</div>
<svg style="left:705px;top:106px" width="36" height="36" viewBox="0 0 36 36"><g fill="none" stroke="#d15c3a" stroke-width="1.6"><rect x="1" y="1" width="34" height="34"/><rect x="5.5" y="5.5" width="10.5" height="10.5"/><rect x="20" y="5.5" width="10.5" height="10.5"/><rect x="5.5" y="20" width="10.5" height="10.5"/><rect x="20" y="20" width="10.5" height="10.5"/></g></svg>
<div class="t" style="left:663.0px;top:149.8px;width:120px;text-align:center;font-size:15.2px;color:#242424">Add-ins</div>
<div class="t" style="left:661.5px;top:202.5px;width:120px;text-align:center;font-size:12.8px;color:#242424">Add-ins</div>
<svg style="left:774px;top:100px" width="50" height="50" viewBox="0 0 50 50"><path d="M5 42.5 L7 33.5 L28 5.8 L34.3 10.2 L13.5 38.5 Z" fill="#fff" stroke="#1f5fc8" stroke-width="1.9" stroke-linejoin="round"/><path d="M27.5 5 L35 10.5 L31.8 14.5 L24.5 9.2Z" fill="#1f5fc8"/><g fill="#1f5fc8"><rect x="27.4" y="15.3" width="15.3" height="6" rx="3"/><rect x="20.8" y="24.4" width="15.6" height="5.6" rx="2.8"/><rect x="14.2" y="32.8" width="15.9" height="5.8" rx="2.9"/></g><path d="M4.5 43 L8 41 L6 39Z" fill="#1f5fc8"/></svg>
<div class="t" style="left:737.8px;top:149.8px;width:120px;text-align:center;font-size:15.1px;color:#242424">Editor</div>
<svg style="left:834px;top:105px" width="40" height="37" viewBox="0 0 40 37"><defs>
<linearGradient id="cp1" x1="0" y1="0" x2="0.3" y2="1"><stop offset="0" stop-color="#1aa0f0"/><stop offset="0.55" stop-color="#3cb860"/><stop offset="1" stop-color="#f0c21a"/></linearGradient>
<linearGradient id="cp2" x1="0.7" y1="0" x2="0.3" y2="1"><stop offset="0" stop-color="#a455f0"/><stop offset="0.5" stop-color="#f0508c"/><stop offset="1" stop-color="#f8a060"/></linearGradient></defs>
<path d="M9 2.1 L24 2.1 Q28 2.1 29.2 11 L22.2 12 L13.3 26.2 L5 26.2 Q1.5 26.2 1.5 22 L1.6 11 Q1.8 2.1 9 2.1 Z" fill="url(#cp1)"/>
<path d="M20.5 2.1 L24 2.1 Q28 2.1 29.2 11 L22.6 11.6 Z" fill="#1a4fd8"/>
<path d="M24.3 11 L33 11 Q37.2 11 37.2 17 L37 27 Q36.8 35.5 29 35.5 L16 35.5 Q12 35.5 11 26.5 L18.8 26.2 Z" fill="url(#cp2)"/>
<path d="M11 26.5 L18.8 26.2 L15.8 35.5 Q12 35.5 11 26.5Z" fill="#f05a28"/>
</svg>
<div class="t" style="left:793.0px;top:149.8px;width:120px;text-align:center;font-size:15.5px;color:#242424">Copilot</div>
<svg style="left:924.5px;top:199px" width="12" height="8" viewBox="0 0 12 8"><path d="M0.8 0.8L6 6.5L11.2 0.8" fill="none" stroke="#333" stroke-width="1.3"/></svg>
<div class="a" style="left:121px;top:235px;width:694px;height:790px;background:#fff;border:1px solid #c8c8c8"></div>
<div class="t" style="left:269.7px;top:277.2px;font-size:15.5px;color:#7a7a7a;font-weight:700;">Drone Development Program Specification Document</div>
<div class="t" style="left:205.5px;top:349.3px;font-size:12.1px;color:#121212;font-weight:700;">1. Introduction</div>
<div class="a" style="left:226.6px;top:377.9px;width:4.5px;height:4.5px;border-radius:50%;background:#111"></div>
<div class="t" style="left:247.3px;top:374.5px;font-size:12.35px;color:#121212;font-weight:400;">Objective of the Drone Development Program</div>
<div class="a" style="left:226.6px;top:405.1px;width:4.5px;height:4.5px;border-radius:50%;background:#111"></div>
<div class="t" style="left:247.3px;top:401.7px;font-size:12.35px;color:#121212;font-weight:400;">Scope: End-to-end development from propulsion and flight systems to final assembly</div>
<div class="t" style="left:247.3px;top:418.4px;font-size:12.35px;color:#121212;font-weight:400;">and testing</div>
<div class="a" style="left:226.6px;top:448.1px;width:4.5px;height:4.5px;border-radius:50%;background:#111"></div>
<div class="t" style="left:247.3px;top:444.7px;font-size:12.35px;color:#121212;font-weight:400;">Compliance with aviation safety standards (e.g., ASTM F38, ISO 21384)</div>
<div class="a" style="left:205px;top:480px;width:527px;height:1px;background:#9f9f9f"></div>
<div class="t" style="left:205.5px;top:496.8px;font-size:12.1px;color:#121212;font-weight:700;">2. System Overview</div>
<div class="a" style="left:226.6px;top:526.5px;width:4.5px;height:4.5px;border-radius:50%;background:#111"></div>
<div class="t" style="left:247.3px;top:523.1px;font-size:12.35px;color:#121212;font-weight:400;">Modular architecture: Propulsion, Frame, Avionics, and Control Systems</div>
<div class="a" style="left:226.6px;top:552.9px;width:4.5px;height:4.5px;border-radius:50%;background:#111"></div>
<div class="t" style="left:247.3px;top:549.5px;font-size:12.35px;color:#121212;font-weight:400;">Intended Applications: Surveillance, Delivery, Research, or Defence</div>
<div class="a" style="left:226.6px;top:579.4px;width:4.5px;height:4.5px;border-radius:50%;background:#111"></div>
<div class="t" style="left:247.3px;top:576.0px;font-size:12.35px;color:#121212;font-weight:400;">Key Performance Targets:</div>
<div class="a" style="left:269px;top:605.5px;width:6px;height:6px;border-radius:50%;border:1.2px solid #111"></div>
<div class="t" style="left:289px;top:601.9px;font-size:12.35px;color:#121212;font-weight:400;">Payload capacity</div>
<div class="a" style="left:269px;top:631.8px;width:6px;height:6px;border-radius:50%;border:1.2px solid #111"></div>
<div class="t" style="left:289px;top:628.2px;font-size:12.35px;color:#121212;font-weight:400;">Flight endurance</div>
<div class="a" style="left:269px;top:658.5px;width:6px;height:6px;border-radius:50%;border:1.2px solid #111"></div>
<div class="t" style="left:289px;top:654.9px;font-size:12.35px;color:#121212;font-weight:400;">Range</div>
<div class="a" style="left:269px;top:684.7px;width:6px;height:6px;border-radius:50%;border:1.2px solid #111"></div>
<div class="t" style="left:289px;top:681.1px;font-size:12.35px;color:#121212;font-weight:400;">Stability &amp; safety</div>
<div class="a" style="left:205px;top:716px;width:527px;height:1px;background:#9f9f9f"></div>
<div class="t" style="left:205.5px;top:733.4px;font-size:12.1px;color:#121212;font-weight:700;">3. Program Structure</div>
<div class="a" style="left:226.6px;top:762.9px;width:4.5px;height:4.5px;border-radius:50%;background:#111"></div>
<div class="t" style="left:247.3px;top:759.5px;font-size:12.35px;color:#121212;font-weight:400;"><b>Phases:</b> Propulsion System Design, Frame CAD &amp; Manufacturing, Control System</div>
<div class="t" style="left:247.3px;top:777.1px;font-size:12.35px;color:#121212;font-weight:400;">Development, Assembly &amp; Testing</div>
<div class="a" style="left:226.6px;top:806.8px;width:4.5px;height:4.5px;border-radius:50%;background:#111"></div>
<div class="t" style="left:247.3px;top:803.4px;font-size:12.35px;color:#121212;font-weight:400;"><b>Milestones:</b> Powertrain Selection, Frame Component Production, Avionics Integration,</div>
<div class="t" style="left:247.3px;top:819.9px;font-size:12.35px;color:#121212;font-weight:400;">Test Flights</div>
<div class="a" style="left:226.6px;top:849.5px;width:4.5px;height:4.5px;border-radius:50%;background:#111"></div>
<div class="t" style="left:247.3px;top:846.1px;font-size:12.35px;color:#121212;font-weight:400;"><b>Deliverables:</b> CAD models, Manufacturing drawings, Simulation results, Test reports</div>
<div class="a" style="left:205px;top:880.5px;width:527px;height:1px;background:#9f9f9f"></div>
<div class="t" style="left:205.5px;top:898.4px;font-size:12.1px;color:#121212;font-weight:700;">4. Critical Parameters</div>
<div class="t" style="left:205.5px;top:924.9px;font-size:12.1px;color:#121212;font-weight:700;">4.1 Propulsion &amp; Powertrain</div>
<div class="a" style="left:226.6px;top:954.6px;width:4.5px;height:4.5px;border-radius:50%;background:#111"></div>
<div class="t" style="left:247.3px;top:951.2px;font-size:12.35px;color:#121212;font-weight:400;">Motor thrust-to-weight ratio &#8805; 2.0</div>
<div class="a" style="left:226.6px;top:979.9px;width:4.5px;height:4.5px;border-radius:50%;background:#111"></div>
<div class="t" style="left:247.3px;top:976.5px;font-size:12.35px;color:#121212;font-weight:400;">Propeller efficiency &gt; 80% at cruise RPM</div>
<div class="a" style="left:226.6px;top:1005.7px;width:4.5px;height:4.5px;border-radius:50%;background:#111"></div>
<div class="t" style="left:247.3px;top:1002.3px;font-size:12.35px;color:#121212;font-weight:400;">Endurance: Minimum 30 minutes with 1.5 kg payload</div>
<div class="a" style="left:0;top:1005px;width:957px;height:27px;background:#f1f1f1;border-top:1px solid #f8f8f8"></div>
<div class="a" style="left:0;top:1032px;width:957px;height:3px;background:#d9d9dc;border-top:1px solid #8f8f8f"></div>
<div class="t" style="left:15px;top:1012.5px;font-size:13px;color:#3d3d3d;font-weight:400;">Page 1 of 2</div>
<div class="t" style="left:107px;top:1012.5px;font-size:13px;color:#3d3d3d;font-weight:400;">334 words</div>
<svg style="left:189px;top:1006px" width="26" height="29" viewBox="0 0 26 29"><g fill="none" stroke="#333" stroke-width="1.3"><path d="M10.4 19.9 H4.5 V5.6 H9.5 Q12.3 5.6 12.3 8.5 V15.1"/><path d="M12.3 8.5 Q12.3 5.6 15 5.6 H20.2 V12.9"/><path d="M10.9 17.1 L14.6 21 L21.3 15.1"/></g></svg>
<div class="t" style="left:232px;top:1012.5px;font-size:12.6px;color:#3d3d3d;font-weight:400;">English (India)</div>
<div class="t" style="left:338.5px;top:1012.5px;font-size:12.8px;color:#3d3d3d;font-weight:400;">Text Predictions: On</div>
<svg style="left:501px;top:1010px" width="18" height="18" viewBox="0 0 18 18"><g fill="none" stroke="#444" stroke-width="1.1"><path d="M1 5V1H5M13 1H17V5M17 13V17H13M5 17H1V13"/><path d="M5 3.5H10L13 6.5V14.5H5Z"/><path d="M10 3.5V6.5H13"/></g></svg>
<div class="t" style="left:522.4px;top:1012.6px;font-size:12px;color:#3d3d3d;font-weight:400;">Focus</div>
<svg style="left:586.5px;top:1011px" width="18" height="16" viewBox="0 0 18 16"><g fill="none" stroke="#444" stroke-width="1.1"><path d="M1 1.5 Q5 0.5 9 2.5 Q13 0.5 17 1.5V14 Q13 13 9 15 Q5 13 1 14Z"/><path d="M9 2.5V15M3 5H7M3 8H7M3 11H7M11 5H15M11 8H15M11 11H15"/></g></svg>
<div class="a" style="left:621px;top:1006px;width:50px;height:26px;background:#dadada"></div>
<svg style="left:638px;top:1011px" width="15" height="17" viewBox="0 0 15 17"><g fill="none" stroke="#333" stroke-width="1.1"><rect x="0.5" y="0.5" width="14" height="16"/><path d="M3 4H12M3 6.5H12M3 9H12M3 11.5H12M3 14H12"/></g></svg>
<svg style="left:687px;top:1010px" width="19" height="18" viewBox="0 0 19 18"><g fill="none" stroke="#444" stroke-width="1.1"><path d="M9 16H0.5V0.5H15V8"/><path d="M0.5 4H15M3 7H9M3 10H8M3 13H7"/></g><circle cx="13.5" cy="12.5" r="5" fill="#fff" stroke="#333" stroke-width="1.2"/><path d="M8.5 12.5H18.5M13.5 7.5V17.5M13.5 7.5Q10.5 12.5 13.5 17.5M13.5 7.5Q16.5 12.5 13.5 17.5" fill="none" stroke="#333" stroke-width="0.9"/></svg>
<div class="a" style="left:728px;top:1018px;width:10px;height:1.3px;background:#444"></div>
<div class="a" style="left:744px;top:1018.5px;width:125px;height:1px;background:#777"></div>
<div class="a" style="left:806px;top:1015px;width:1px;height:8px;background:#777"></div>
<div class="a" style="left:784px;top:1012px;width:6px;height:13.5px;background:#555;border-radius:1px"></div>
<svg style="left:875px;top:1014px" width="10" height="10" viewBox="0 0 10 10"><path d="M5 0V10M0 5H10" stroke="#444" stroke-width="1.2"/></svg>
<div class="t" style="left:901.6px;top:1012.6px;font-size:12.2px;color:#3d3d3d;font-weight:400;">70%</div>
</div>
</body></html>
